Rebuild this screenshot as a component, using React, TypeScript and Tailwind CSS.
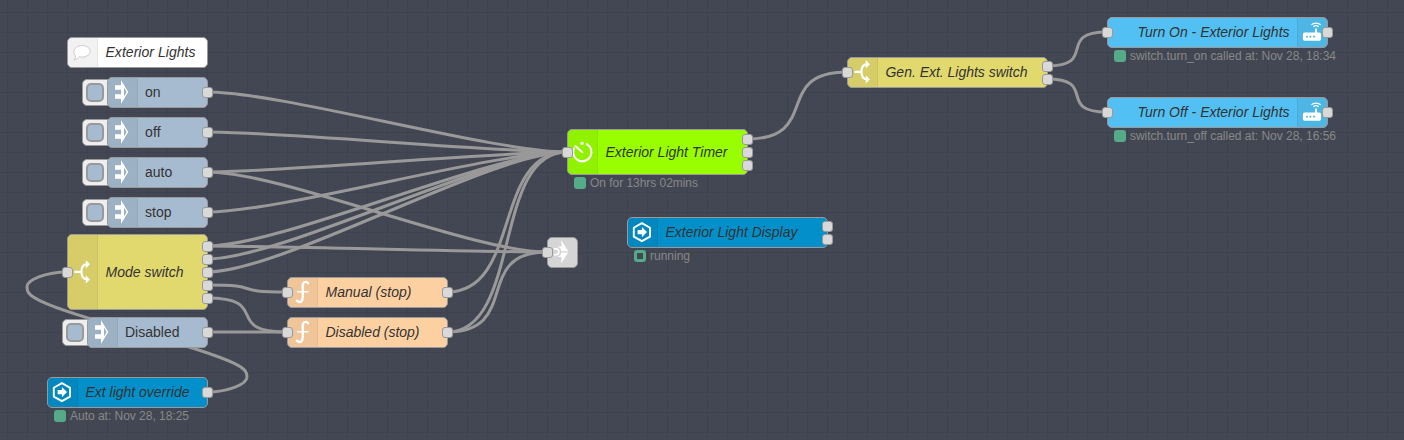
import React from "react";

type IconName = "comment" | "inject" | "switch" | "func" | "timer" | "hass" | "router" | "link";

interface FlowNode {
  x: number;
  y: number;
  w: number;
  h: number;
  color: string;
  icon: IconName;
  label?: string;
  labelX?: number;
  labelW?: number;
  italic?: boolean;
  button?: boolean;
  iconRight?: boolean;
  inputs?: number[];
  outputs?: number[];
  status?: { text: string; ring?: boolean; width: number };
}

const NODES: FlowNode[] = [
  { x: 67, y: 37, w: 140, h: 30, color: "bg-white", icon: "comment", label: "Exterior Lights", labelX: 38.5, labelW: 90, italic: true },
  { x: 107, y: 77, w: 100, h: 30, color: "bg-[#a6bbcf]", icon: "inject", label: "on", labelX: 38, labelW: 15.6, button: true, outputs: [15] },
  { x: 107, y: 117, w: 100, h: 30, color: "bg-[#a6bbcf]", icon: "inject", label: "off", labelX: 38, labelW: 15.6, button: true, outputs: [15] },
  { x: 107, y: 157, w: 100, h: 30, color: "bg-[#a6bbcf]", icon: "inject", label: "auto", labelX: 38, labelW: 27.3, button: true, outputs: [15] },
  { x: 107, y: 197, w: 100, h: 30, color: "bg-[#a6bbcf]", icon: "inject", label: "stop", labelX: 38, labelW: 26.5, button: true, outputs: [15] },
  { x: 67, y: 234, w: 140, h: 75, color: "bg-[#e2d96e]", icon: "switch", label: "Mode switch", labelX: 38.5, labelW: 78, italic: true, inputs: [38], outputs: [12, 25, 38, 51, 64] },
  { x: 87, y: 317, w: 120, h: 30, color: "bg-[#a6bbcf]", icon: "inject", label: "Disabled", labelX: 38, labelW: 54.5, button: true, outputs: [15] },
  { x: 47, y: 377, w: 160, h: 30, color: "bg-[#0390ca]", icon: "hass", label: "Ext light override", labelX: 38.5, labelW: 104, italic: true, outputs: [15], status: { text: "Auto at: Nov 28, 18:25", width: 119 } },
  { x: 287, y: 277, w: 160, h: 30, color: "bg-[#fdd0a2]", icon: "func", label: "Manual (stop)", labelX: 38.5, labelW: 86, italic: true, inputs: [15], outputs: [15] },
  { x: 287, y: 317, w: 160, h: 30, color: "bg-[#fdd0a2]", icon: "func", label: "Disabled (stop)", labelX: 38.5, labelW: 94, italic: true, inputs: [15], outputs: [15] },
  { x: 547, y: 237, w: 30, h: 30, color: "bg-[#d5d5d5]", icon: "link", inputs: [15] },
  { x: 567, y: 129, w: 180, h: 45, color: "bg-[#99ff00]", icon: "timer", label: "Exterior Light Timer", labelX: 38.5, labelW: 122, italic: true, inputs: [23], outputs: [10, 23, 36], status: { text: "On for 13hrs 02mins", width: 108 } },
  { x: 627, y: 217, w: 200, h: 30, color: "bg-[#0390ca]", icon: "hass", label: "Exterior Light Display", labelX: 38.5, labelW: 132, italic: true, outputs: [9, 22], status: { text: "running", ring: true, width: 40 } },
  { x: 847, y: 57, w: 200, h: 30, color: "bg-[#e2d96e]", icon: "switch", label: "Gen. Ext. Lights switch", labelX: 38.5, labelW: 142, italic: true, inputs: [15], outputs: [9, 22] },
  { x: 1107, y: 17, w: 220, h: 30, color: "bg-[#52c0f2]", icon: "router", label: "Turn On - Exterior Lights", labelX: 30.5, labelW: 152, italic: true, iconRight: true, inputs: [15], outputs: [15], status: { text: "switch.turn_on called at: Nov 28, 18:34", width: 206 } },
  { x: 1107, y: 97, w: 220, h: 30, color: "bg-[#52c0f2]", icon: "router", label: "Turn Off - Exterior Lights", labelX: 30.5, labelW: 152, italic: true, iconRight: true, inputs: [15], outputs: [15], status: { text: "switch.turn_off called at: Nov 28, 16:56", width: 206 } },
];

const WIRES: [number, number, number, number][] = [
  [207, 92, 567, 152],
  [207, 132, 567, 152],
  [207, 172, 567, 152],
  [207, 172, 547, 252],
  [207, 212, 567, 152],
  [207, 246, 567, 152],
  [207, 246, 547, 252],
  [207, 259, 567, 152],
  [207, 272, 567, 152],
  [207, 285, 287, 292],
  [207, 298, 287, 332],
  [207, 332, 287, 332],
  [447, 292, 567, 152],
  [447, 332, 567, 152],
  [447, 332, 547, 252],
  [747, 139, 847, 72],
  [1047, 66, 1107, 32],
  [1047, 79, 1107, 112],
  [207, 392, 67, 272],
];

/** Bezier route from an output to an input; loops around when the target is behind. */
function wirePath([ox, oy, tx, ty]: [number, number, number, number]): string {
  const dx = tx - ox;
  const dy = ty - oy;
  const unit = 100;
  if (dx > 0) {
    const reach = 0.75 * Math.min(unit, Math.hypot(dx, dy));
    return `M${ox} ${oy} C${ox + reach} ${oy} ${tx - reach} ${ty} ${tx} ${ty}`;
  }
  const scale = 0.4 - 0.2 * Math.max(0, (unit - Math.min(Math.abs(dx), Math.abs(dy))) / unit);
  const midX = Math.floor(tx - dx / 2);
  const midY = Math.floor(ty - dy / 2);
  const bend = 15;
  const y1 = (ty + midY) / 2;
  const topX = ox + unit * scale;
  const topY = Math.max(y1 - dy / 2, oy - bend);
  const botX = tx - unit * scale;
  const botY = Math.min(y1, ty + bend);
  const x1 = (ox + topX) / 2;
  const a = [x1, oy];
  const b = [topX, Math.min(oy, topY + bend)];
  const c = [x1, Math.max(midY, topY - bend)];
  const d = [botX, Math.min(midY, botY + bend)];
  const e = [(tx + botX) / 2, ty];
  if (c[1] === topY - bend) {
    if (Math.abs(dy) < bend * 10) {
      b[1] = topY + bend / 2;
      d[1] = botY + bend / 2;
    }
    c[0] = topX;
  }
  return `M${ox} ${oy} C${a} ${b} ${topX},${topY} S${c} ${midX},${midY} S${d} ${botX},${botY} S${e} ${tx},${ty}`;
}

function Icon({ name }: { name: IconName }) {
  const cls = "mb-px -ml-px h-[30px] w-[30px] shrink-0";
  switch (name) {
    case "comment":
      return (
        <svg viewBox="0 0 30 30" className={cls} fill="#fff" stroke="#c9c5c0" strokeWidth="0.9">
          <path d="M15.200 8.600c4.700 0 8 2.600 8 5.700s-3.300 5.800-8 5.800c-1.100 0-2-.1-2.900-.4-1.300 1.800-3 3-5.400 3.400 1.100-1.100 1.600-2.500 1.700-4.300-1.100-1-1.700-2.600-1.700-4.400 0-3.200 3.600-5.800 8.300-5.800z" />
        </svg>
      );
    case "inject":
      return (
        <svg viewBox="0 0 30 30" className={cls} fill="#fff">
          <path
            fillRule="evenodd"
            d="M8 8.300h6V3.200L21.300 15 14 26.800v-5.100H8v-4.500h6v-4.400H8zM17 10.600v8.800L19.600 15z"
          />
        </svg>
      );
    case "switch":
      return (
        <svg viewBox="0 0 30 30" className={cls}>
          <path d="M7.500 14.800h6.500M20 7.200c-3.800.3-5.600 3.600-5.600 7.600s1.800 7.300 5.600 7.600" fill="none" stroke="#fff" strokeWidth="2.200" />
          <path d="M18.800 3 22.900 7.200 18.800 11.400zM18.800 18.200l4.100 4.200-4.100 4.200z" fill="#fff" />
        </svg>
      );
    case "func":
      return (
        <svg viewBox="0 0 30 30" className={cls} fill="none" stroke="#fff" strokeWidth="2.400" strokeLinecap="round">
          <path d="M21 6.200c-.8-1.800-4.200-2-5 .8-.9 3.500.6 12-.8 16-.9 2.500-3.700 2.700-5.200.8" />
          <path d="M10.700 14.700h10" strokeWidth="1.500" />
        </svg>
      );
    case "timer":
      return (
        <svg viewBox="0 0 30 30" className={cls} fill="none" stroke="#fff" strokeWidth="2" strokeLinecap="round">
          <path d="M19.800 7.100A9.200 9.200 0 1 1 6.800 11.600" />
          <path d="m8.300 9 7 6.300" />
          <circle cx="15" cy="6.400" r="1.700" fill="#fff" stroke="none" />
        </svg>
      );
    case "hass":
      return (
        <svg viewBox="0 0 30 30" className={cls}>
          <path d="m14.900 6.100 8.100 4.600v8.900l-8.100 4.600-8.100-4.600v-8.900z" fill="none" stroke="#fff" strokeWidth="1.900" />
          <path d="M10.600 12.900h4.300V10l5.100 5.100-5.100 5.100v-2.900h-4.300z" fill="#fff" />
        </svg>
      );
    case "router":
      return (
        <svg viewBox="0 0 30 30" className={cls}>
          <path
            fillRule="evenodd"
            fill="#fff"
            d="M7.700 15.600h10.400v-4h1.900v4h2.200c1 0 1.800.8 1.800 1.800v4.600c0 1-.8 1.800-1.800 1.800H7.700a1.800 1.800 0 0 1-1.800-1.800v-4.600c0-1 .8-1.800 1.800-1.800zm1.200 3.100v1.800h1.800v-1.800zm3.600 0v1.800h1.800v-1.800zm3.600 0v1.800h1.800v-1.800z"
          />
          <path d="M14.400 7.800c2.600-2.300 6.700-2.300 9.300 0M16.300 9.900c1.600-1.400 3.900-1.400 5.500 0" fill="none" stroke="#fff" strokeWidth="1.200" />
        </svg>
      );
    case "link":
      return (
        <svg viewBox="0 0 30 30" className={cls} fill="#fff">
          <path d="M14 3 21.300 14.200H14.200C14.200 11.900 13 10.500 10.500 9.800L14.800 9.300z" />
          <path d="M14 26.600 21.300 15.400H14.200C14.200 17.700 13 19.100 10.500 19.800l4.300.5z" />
          <path d="M7 11.900h1.900a2.900 2.900 0 0 1 0 5.900H7" fill="none" stroke="#fff" strokeWidth="1.600" />
        </svg>
      );
  }
}

function Port({ x, y }: { x: number; y: number }) {
  return (
    <span
      className="absolute size-[11px] rounded-[3px] border border-[#999] bg-[#d9d9d9]"
      style={{ left: x - 5, top: y - 5 }}
    />
  );
}

function NodeLabel({ node }: { node: FlowNode }) {
  return (
    <svg className="absolute inset-0 size-full overflow-visible">
      <text
        x={node.labelX}
        y={node.h / 2 + (node.h % 2 ? 5.5 : 5)}
        textLength={node.labelW}
        className={node.italic ? "fill-[#333] text-[14px] italic" : "fill-[#333] text-[14px]"}
      >
        {node.label}
      </text>
    </svg>
  );
}

function NodeBox({ node }: { node: FlowNode }) {
  const { x, y, w, h } = node;
  return (
    <div className="absolute" style={{ left: x, top: y, width: w + 1, height: h + 1 }}>
      {node.button && (
        <div className="absolute top-[2px] -left-[25px] flex h-[27px] w-8 items-center rounded-[5px] border border-[#999] bg-[#eee] pl-[3px]">
          <span className="h-[19px] w-[18px] rounded-[5px] border-2 border-[#999] bg-[#a6bbcf]" />
        </div>
      )}
      <div
        className={`relative flex size-full items-center overflow-hidden rounded-[5px] border border-[#999] ${node.color} ${node.iconRight ? "justify-end" : ""}`}
      >
        {node.icon === "link" ? (
          <Icon name="link" />
        ) : (
          <div
            className={`flex h-full w-[30px] shrink-0 items-center bg-black/5 ${node.iconRight ? "border-l border-black/5" : "border-r border-black/5"}`}
          >
            <Icon name={node.icon} />
          </div>
        )}
      </div>
      {node.label && <NodeLabel node={node} />}
      {node.inputs?.map((p) => <Port key={`i${p}`} x={0} y={p} />)}
      {node.outputs?.map((p) => <Port key={`o${p}`} x={w} y={p} />)}
      {node.status && (
        <div className="flex items-center pt-[2px] pl-[7px]">
          <span
            className={
              node.status.ring
                ? "size-3 shrink-0 rounded-[3px] border-[3px] border-[#5a8]"
                : "size-3 shrink-0 rounded-[3px] bg-[#5a8]"
            }
          />
          <svg className="h-3 shrink-0 overflow-visible" width={node.status.width + 4}>
            <text x="4" y="10" textLength={node.status.width} className="fill-[#888] text-[12px]">
              {node.status.text}
            </text>
          </svg>
        </div>
      )}
    </div>
  );
}

export default function App() {
  return (
    <main className="relative h-[440px] w-[1404px] overflow-hidden bg-[#434753] bg-[linear-gradient(to_right,#3e424d_1px,transparent_1px),linear-gradient(to_bottom,#3e424d_1px,transparent_1px)] bg-[size:20px_20px] bg-[position:7px_12px] font-['Liberation_Sans',Arial,sans-serif]">
      <svg className="absolute inset-0" width="1404" height="440" fill="none" stroke="#999" strokeWidth="3">
        {WIRES.map((wire) => (
          <path key={wire.join()} d={wirePath(wire)} />
        ))}
      </svg>
      {NODES.map((node) => (
        <NodeBox key={`${node.x}-${node.y}`} node={node} />
      ))}
    </main>
  );
}
